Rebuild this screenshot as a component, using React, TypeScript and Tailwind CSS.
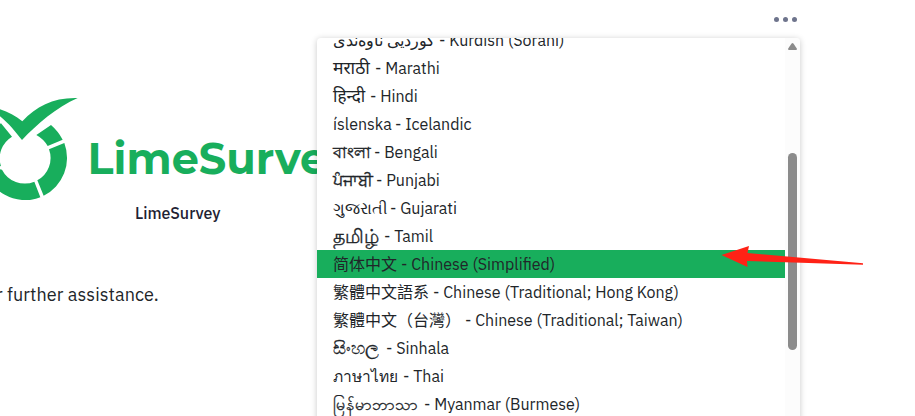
const languages = [
  { native: "کوردیی ناوەندی", name: "Kurdish (Sorani)", nativeBox: "w-[106px]" },
  { native: "मराठी", name: "Marathi", nativeBox: "w-[42px] text-[17.5px]" },
  { native: "हिन्दी", name: "Hindi", nativeBox: "w-[37px] text-[17px]" },
  { native: "íslenska", name: "Icelandic", nativeBox: "w-[62px]" },
  { native: "বাংলা", name: "Bengali", nativeBox: "w-[41px] [-webkit-text-stroke:0.4px]" },
  { native: "ਪੰਜਾਬੀ", name: "Punjabi", nativeBox: "w-[43px] [-webkit-text-stroke:0.4px]" },
  { native: "ગુજરાતી", name: "Gujarati", nativeBox: "w-[57px] text-[15.5px]" },
  { native: "தமிழ்", name: "Tamil", nativeBox: "w-[51px] text-[18.5px] [-webkit-text-stroke:0.3px]" },
  { native: "简体中文", name: "Chinese (Simplified)", nativeBox: "w-[68px]", selected: true },
  { native: "繁體中文語系", name: "Chinese (Traditional; Hong Kong)", nativeBox: "w-[100px]" },
  { native: "繁體中文（台灣）", name: "Chinese (Traditional; Taiwan)", nativeBox: "w-[132px]" },
  { native: "සිංහල", name: "Sinhala", nativeBox: "w-[53px] text-[18px] [-webkit-text-stroke:0.3px]" },
  { native: "ภาษาไทย", name: "Thai", nativeBox: "w-[70px] text-[15.5px]" },
  { native: "မြန်မာဘာသာ", name: "Myanmar (Burmese)", nativeBox: "w-[91px] [-webkit-text-stroke:0.3px]" },
];

function Logo() {
  return (
    <div className="flex h-[120px] items-start">
      <svg className="block h-[120px] w-[80px] shrink-0" viewBox="0 0 240 360" fill="#18ae5c">
        <path d="M-20 82C12 89 42 103 67 124C110 78 160 52 233 54C170 82 110 133 66 180C42 151 22 123 -20 94Z" />
        <path d="M153 135Q174 153 188 179L143 198Q131 177 109 165Z" />
        <path d="M193 189A126.5 126.5 0 0 1 131 347L112 301A76 76 0 0 0 147 208Z" />
        <path d="M103 305L121 352A126.5 126.5 0 0 1 -49 255L6 269A76 76 0 0 0 103 305Z" />
        <path d="M3 130L36 170A76 76 0 0 0 3 259L-48 247A126.5 126.5 0 0 1 3 130Z" />
      </svg>
      <span className="ml-[7.5px] mt-[54px] whitespace-nowrap font-['Montserrat','Inter',sans-serif] text-[43px] font-bold leading-[50px] text-[#18ae5c]">
        LimeSurvey
      </span>
    </div>
  );
}

function LanguageMenu() {
  return (
    <div className="absolute left-[317px] top-[38px] flex h-[400px] w-[483px] overflow-hidden rounded-[4px] bg-white shadow-[0_1px_6px_rgba(0,0,0,0.22)]">
      <ul className="-mt-[12px] flex-1">
        {languages.map((l) => (
          <li
            key={l.name}
            className={`flex h-[28px] items-center whitespace-nowrap pl-4 leading-[28px] ${l.selected ? "bg-[#18ae5c]" : ""}`}
          >
            <span className={`${l.nativeBox} shrink-0`}>{l.native}</span>
            <span>- {l.name}</span>
          </li>
        ))}
      </ul>
      <div className="flex w-[15px] flex-col items-center bg-[#fcfcfc] pt-[5px]">
        <svg className="h-[7px] w-[9px]" viewBox="0 0 9 7" fill="#8b8b8b">
          <path d="M3.6.6Q4.5-.5 5.4.6L8.8 5.5Q9.3 7 8 7H1Q-.3 7 .2 5.5Z" />
        </svg>
        <div className="mt-[103px] h-[197px] w-[9px] rounded-full bg-[#8b8b8b]" />
      </div>
    </div>
  );
}

export default function App() {
  return (
    <div className="relative h-[416px] w-[915px] overflow-hidden bg-white font-['IBM_Plex_Sans','Roboto','Noto_Sans','Noto_Sans_CJK_SC',sans-serif] text-[16px] text-[#212529]">
      <header className="flex h-[38px] items-center justify-end pr-[118px]">
        <div className="flex gap-[4px]">
          <i className="size-[5px] rounded-full bg-[#6e748c]" />
          <i className="size-[5px] rounded-full bg-[#6e748c]" />
          <i className="size-[5px] rounded-full bg-[#6e748c]" />
        </div>
      </header>
      <main className="pt-[42px]">
        <Logo />
        <p className="pl-[135px] pt-[1px] text-[16px] font-medium leading-[24px] text-[#1e2233]">LimeSurvey</p>
        <p className="-ml-[4px] mt-[56px] whitespace-nowrap text-[18px] leading-[28px] tracking-[0.1px]">r further assistance.</p>
      </main>
      <LanguageMenu />
      <svg className="absolute left-[720px] top-[244px] h-[24px] w-[144px]" viewBox="0 0 144 24" fill="#ff2216">
        <path d="M1.5 11L29 2L27.5 9L143 19.2V20.8L27 17L27.5 23Z" />
      </svg>
    </div>
  );
}
